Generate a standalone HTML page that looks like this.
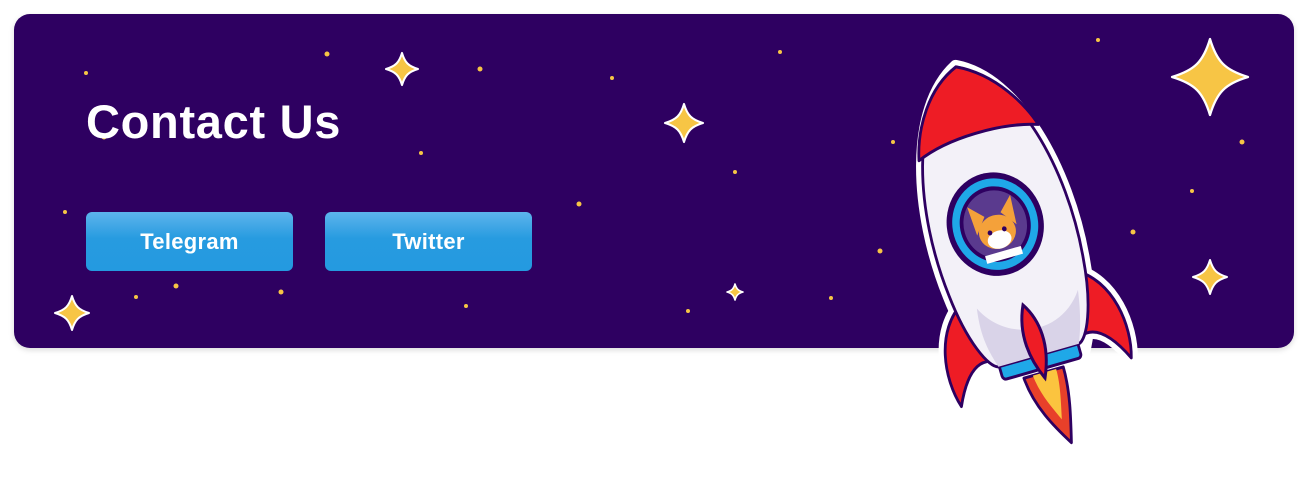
<!DOCTYPE html>
<html><head><style>
body{margin:0;width:1308px;height:478px;background:#fff;overflow:hidden;position:relative;font-family:"Liberation Sans",sans-serif}
.card{position:absolute;left:14px;top:14px;width:1280px;height:334px;background:#2e0061;border-radius:16px;box-shadow:0 2px 6px rgba(0,0,0,.15)}
h1{position:absolute;left:86px;top:94px;margin:0;color:#fff;font-size:47px;font-weight:bold;letter-spacing:0.7px}
.btn{position:absolute;top:212px;width:207px;height:59px;border-radius:6px;background:linear-gradient(#5db4ec,#279be0 45%,#249ae0);color:#fff;font-size:22px;font-weight:bold;text-align:center;line-height:59px;letter-spacing:0.3px}
svg{position:absolute;left:0;top:0}
</style></head><body>
<div class="card"></div>
<svg width="1308" height="478">
<defs>
<path id="st" d="M0,-1 C0.18,-0.4 0.4,-0.18 1,0 C0.4,0.18 0.18,0.4 0,1 C-0.18,0.4 -0.4,0.18 -1,0 C-0.4,-0.18 -0.18,-0.4 0,-1Z"/>
</defs>
<g fill="#f7c545">
<circle cx="86" cy="73" r="2"/><circle cx="327" cy="54" r="2.5"/><circle cx="480" cy="69" r="2.5"/><circle cx="612" cy="78" r="2"/><circle cx="780" cy="52" r="2"/><circle cx="1098" cy="40" r="2"/><circle cx="104" cy="137" r="2.5"/><circle cx="421" cy="153" r="2"/><circle cx="735" cy="172" r="2"/><circle cx="893" cy="142" r="2"/><circle cx="1242" cy="142" r="2.5"/><circle cx="1192" cy="191" r="2"/><circle cx="65" cy="212" r="2"/><circle cx="579" cy="204" r="2.5"/><circle cx="880" cy="251" r="2.5"/><circle cx="1133" cy="232" r="2.5"/><circle cx="176" cy="286" r="2.5"/><circle cx="136" cy="297" r="2"/><circle cx="281" cy="292" r="2.5"/><circle cx="466" cy="306" r="2"/><circle cx="688" cy="311" r="2"/><circle cx="831" cy="298" r="2"/>
</g>
<g fill="#f7c545" stroke="#fff" stroke-linejoin="round">
<use href="#st" transform="translate(402,69) scale(16)" stroke-width="0.13"/>
<use href="#st" transform="translate(684,123) scale(19)" stroke-width="0.11"/>
<use href="#st" transform="translate(1210,77) scale(38)" stroke-width="0.06"/>
<use href="#st" transform="translate(72,313) scale(17)" stroke-width="0.12"/>
<use href="#st" transform="translate(1210,277) scale(17)" stroke-width="0.12"/>
<use href="#st" transform="translate(735,292) scale(8)" stroke-width="0.2"/>
</g>
<g transform="translate(1005,238) rotate(-16) scale(0.93,1)" stroke-linejoin="round">
<g stroke="#fff" stroke-width="14" fill="#fff">
<path d="M-62,50 C-100,70 -105,120 -95,150 C-80,120 -65,110 -50,115Z"/>
<path d="M62,50 C100,70 105,120 95,150 C80,120 65,110 50,115Z"/>
<path d="M0,-178 C60,-150 85,-50 75,40 C70,90 55,120 45,135 L-45,135 C-55,120 -70,90 -75,40 C-85,-50 -60,-150 0,-178Z"/>
<path d="M-22,140 C-20,170 -5,195 8,215 C15,190 22,165 22,140Z"/>
<path d="M0,70 C14,95 16,135 0,175 C-14,135 -14,95 0,70Z"/>
</g>
<path d="M-22,140 C-20,170 -5,195 8,215 C15,190 22,165 22,140Z" fill="#e8402a" stroke="#2e0061" stroke-width="3"/>
<path d="M-12,140 C-10,160 -2,175 5,190 C10,170 14,155 14,140Z" fill="#fbc43f"/>
<path d="M-62,50 C-100,70 -105,120 -95,150 C-80,120 -65,110 -50,115Z" fill="#ee1c25" stroke="#2e0061" stroke-width="3"/>
<path d="M62,50 C100,70 105,120 95,150 C80,120 65,110 50,115Z" fill="#ee1c25" stroke="#2e0061" stroke-width="3"/>
<rect x="-44" y="118" width="88" height="18" rx="4" fill="#1fa8e8" stroke="#2e0061" stroke-width="3"/>
<path d="M0,-178 C60,-150 85,-50 75,40 C70,90 55,120 45,122 L-45,122 C-55,120 -70,90 -75,40 C-85,-50 -60,-150 0,-178Z" fill="#f3f1f8" stroke="#2e0061" stroke-width="3"/>
<path d="M-50,60 C-30,100 30,110 60,70 C55,100 48,115 45,122 L-45,122 C-50,105 -55,90 -50,60Z" fill="#d9d3e8"/>
<path d="M0,-178 C40,-160 62,-120 68,-100 C30,-112 -30,-112 -66,-98 C-58,-130 -35,-165 0,-178Z" fill="#ee1c25" stroke="#2e0061" stroke-width="3"/>
<circle cx="-6" cy="-16" r="52" fill="#2e0061"/>
<circle cx="-6" cy="-16" r="46" fill="#1fa8e8"/>
<circle cx="-6" cy="-16" r="38" fill="#2e0061"/>
<circle cx="-6" cy="-16" r="34" fill="#5a3a8e"/>
<path d="M-28,-10 L-30,-40 L-15,-26 Z M16,-10 L18,-40 L3,-26 Z" fill="#f4a13a"/>
<ellipse cx="-6" cy="-8" rx="20" ry="17" fill="#f4a13a"/>
<ellipse cx="-6" cy="0" rx="13" ry="9" fill="#fff"/>
<circle cx="-14" cy="-9" r="2.5" fill="#2e0061"/><circle cx="2" cy="-9" r="2.5" fill="#2e0061"/>
<path d="M-26,12 L14,12 L14,20 L-26,20Z" fill="#fff"/>
</g>
<path d="M1023,305 C1040,320 1050,345 1045,378 C1030,360 1018,335 1023,305Z" fill="#ee1c25" stroke="#2e0061" stroke-width="3"/>
</svg>
<h1>Contact Us</h1>
<div class="btn" style="left:86px">Telegram</div>
<div class="btn" style="left:325px">Twitter</div>
</body></html>
